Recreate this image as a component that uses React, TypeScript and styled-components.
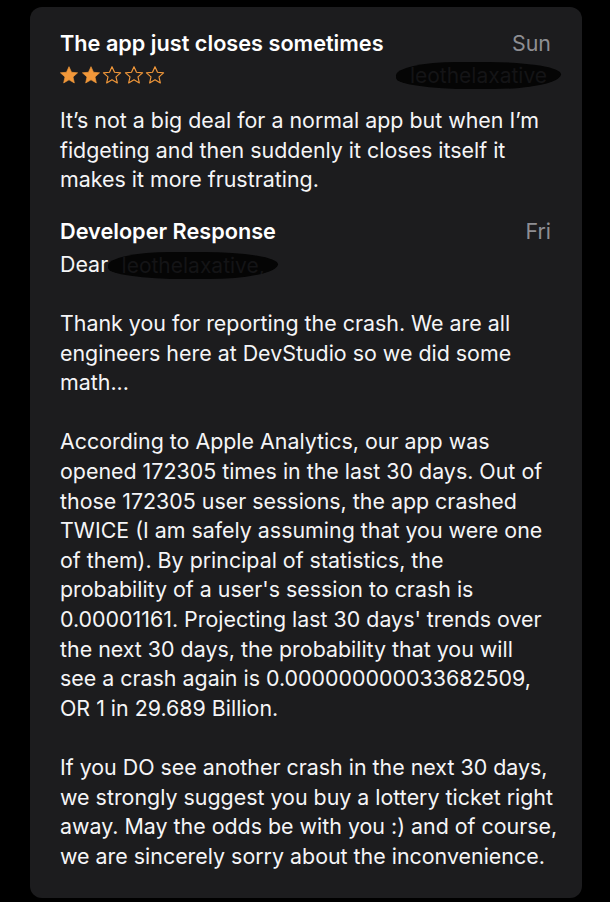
import React from 'react';
import styled, {createGlobalStyle} from 'styled-components';

const GlobalStyle = createGlobalStyle`
  html, body {
    margin: 0;
    padding: 0;
    background: #000;
  }
  body {
    font-family: Inter, "Liberation Sans", sans-serif;
    -webkit-font-smoothing: antialiased;
  }
`;

const Star = ({filled}: {filled: boolean}) => (
  <svg width="20" height="20" viewBox="0 0 24 24">
    <path
      d="M12 2l3 6.7 7.3.7-5.5 4.9 1.6 7.2L12 17.8l-6.4 3.7 1.6-7.2-5.5-4.9 7.3-.7z"
      fill={filled ? '#f2983a' : 'none'}
      stroke="#f2983a"
      strokeWidth={filled ? 0.8 : 1.4}
      strokeLinejoin="round"
    />
  </svg>
);

const App = () => {
  const rating = 2;

  return (
    <Page>
      <GlobalStyle/>
      <Card>
        <HeaderRow>
          <Title>The app just closes sometimes</Title>
          <DateLabel>Sun</DateLabel>
        </HeaderRow>
        <SubRow>
          <Stars>
            {[0, 1, 2, 3, 4].map(i => <Star key={i} filled={i < rating}/>)}
          </Stars>
          <Redacted $width={165}>leothelaxative</Redacted>
        </SubRow>
        <ReviewText>
          It’s not a big deal for a normal app but when I’m<br/>
          fidgeting and then suddenly it closes itself it<br/>
          makes it more frustrating.
        </ReviewText>

        <ResponseHeader>
          <Title>Developer Response</Title>
          <DateLabel>Fri</DateLabel>
        </ResponseHeader>
        <Response>
          <Body>
            Dear<Redacted $width={170}>leothelaxative,</Redacted>
          </Body>
          <Body>
            Thank you for reporting the crash. We are all<br/>
            engineers here at DevStudio so we did some<br/>
            math...
          </Body>
          <Body>
            According to Apple Analytics, our app was<br/>
            opened 172305 times in the last 30 days. Out of<br/>
            those 172305 user sessions, the app crashed<br/>
            TWICE (I am safely assuming that you were one<br/>
            of them). By principal of statistics, the<br/>
            probability of a user's session to crash is<br/>
            0.00001161. Projecting last 30 days' trends over<br/>
            the next 30 days, the probability that you will<br/>
            see a crash again is 0.000000000033682509,<br/>
            OR 1 in 29.689 Billion.
          </Body>
          <Body>
            If you DO see another crash in the next 30 days,<br/>
            we strongly suggest you buy a lottery ticket right<br/>
            away. May the odds be with you :) and of course,<br/>
            we are sincerely sorry about the inconvenience.
          </Body>
        </Response>
      </Card>
    </Page>
  );
};

const Page = styled.div`
  background: #000;
  min-height: 902px;
  padding: 7px 28px 5px 30px;
  box-sizing: border-box;
`;
const Card = styled.div`
  background: #1c1c1e;
  border-radius: 12px;
  padding: 21px 31px 27px 30px;
  color: #fff;
`;
const HeaderRow = styled.div`
  display: flex;
  justify-content: space-between;
  align-items: center;
  height: 30px;
`;
const ResponseHeader = styled(HeaderRow)`
  margin-top: 22px;
  height: 29px;
`;
const Title = styled.div`
  font-size: 21.7px;
  font-weight: 600;
  color: #fff;
`;
const DateLabel = styled.div`
  font-size: 21.4px;
  color: #8e8e93;
`;
const SubRow = styled.div`
  display: flex;
  justify-content: space-between;
  align-items: center;
  height: 26px;
  margin-top: 4px;
  margin-right: -10px;
`;
const Stars = styled.div`
  display: flex;
  gap: 1.5px;
  margin-left: -1px;
`;
const Redacted = styled.span<{$width: number}>`
  display: inline-block;
  width: ${p => p.$width}px;
  height: 27px;
  line-height: 27px;
  background: #050505;
  border-radius: 40% 48% 45% 50% / 55% 50% 60% 45%;
  color: #141416;
  font-size: 21px;
  text-align: center;
  vertical-align: middle;
  overflow: hidden;
`;
const Body = styled.p`
  margin: 0;
  font-size: 21.4px;
  line-height: 29.6px;
  white-space: nowrap;
  color: #f5f5f7;
`;
const ReviewText = styled(Body)`
  margin-top: 18px;
`;
const Response = styled.div`
  margin-top: 4px;
  display: flex;
  flex-direction: column;
  gap: 29.6px;
`;

export default App;
